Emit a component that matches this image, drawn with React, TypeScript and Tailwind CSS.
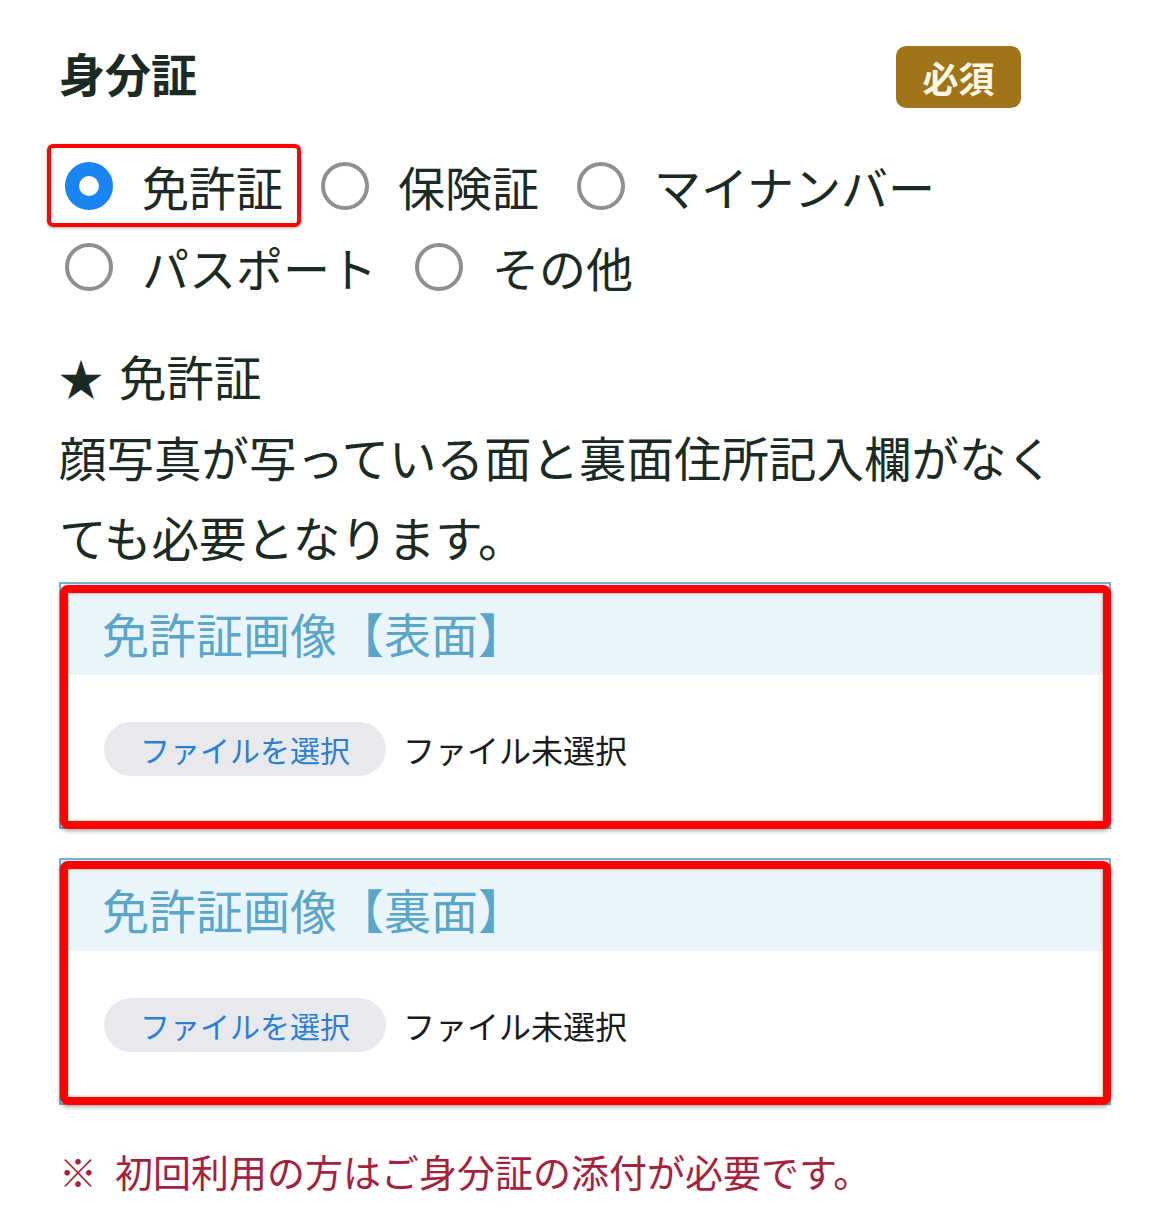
import React from "react";

const font = { fontFamily: '"Noto Sans CJK JP", "Noto Sans", sans-serif' };

const options = ["免許証", "保険証", "マイナンバー", "パスポート", "その他"];

function Radio({ label, checked }: { label: string; checked?: boolean }) {
  return (
    <label className="relative flex h-[81px] items-center">
      {checked && (
        <span className="pointer-events-none absolute -left-[18px] -right-[18px] top-[-1px] h-[83px] rounded-md border-4 border-[#f00] shadow-[0_1px_3px_rgba(0,0,0,0.35)]" />
      )}
      <span
        className={
          checked
            ? "h-12 w-12 shrink-0 rounded-full border-[14px] border-[#1a84f2] bg-white"
            : "h-12 w-12 shrink-0 rounded-full border-4 border-[#8f8f8f] bg-white"
        }
      />
      <span className="ml-[29px] text-[47px] leading-none text-[#1b2a23]">{label}</span>
    </label>
  );
}

function UploadCard({ title }: { title: string }) {
  return (
    <div className="relative border-2 border-[#6fb3cc] bg-white">
      <div className="flex h-[91px] items-center bg-[#eaf4fb] pl-[41px] pt-[5px] text-[47px] leading-none text-[#5aa6c8]">
        {title}
      </div>
      <div className="flex h-[152px] items-center pl-[43px] pb-[4px]">
        <span className="flex h-[54px] w-[282px] items-center justify-center rounded-full bg-[#e8e9ec] text-[30px] text-[#2b7fcf]">
          ファイルを選択
        </span>
        <span className="ml-[17px] text-[32px] text-[#1a1a1a]">ファイル未選択</span>
      </div>
      <span className="pointer-events-none absolute -left-[1px] -right-[2px] top-[1px] -bottom-[2px] rounded-[8px] border-[8px] border-[#f00] shadow-[0_2px_4px_rgba(0,0,0,0.35),inset_0_0_3px_rgba(0,0,0,0.4)]" />
    </div>
  );
}

export default function App() {
  return (
    <div className="min-h-[1220px] w-[1170px] bg-white" style={font}>
      <div className="px-[59px] pt-[40px]">
        <div className="flex items-start justify-between pr-[90px]">
          <h2 className="mt-[9px] text-[46px] font-bold leading-none text-[#1b2a23]">身分証</h2>
          <span className="mt-[6px] flex h-[62px] w-[125px] items-center justify-center rounded-[10px] bg-[#a07418] text-[36px] font-bold text-[#fff8e8]">
            必須
          </span>
        </div>

        <div className="mt-[37px] flex flex-wrap gap-x-[38px] pl-[6px]">
          {options.map((o, i) => (
            <Radio key={o} label={o} checked={i === 0} />
          ))}
        </div>

        <div className="mt-[29px] w-[1020px] text-[47.5px] leading-[80px] text-[#1b2a23]">
          <p>
            <span className="mr-[16px] inline-block text-[44px]">★</span>免許証
          </p>
          <p>顔写真が写っている面と裏面住所記入欄がなくても必要となります。</p>
        </div>

        <div className="mt-[5px] flex flex-col gap-[29px]">
          <UploadCard title="免許証画像【表面】" />
          <UploadCard title="免許証画像【裏面】" />
        </div>

        <p className="mt-[47px] text-[38px] leading-none text-[#a3223e]">
          <span className="mr-[18px]">※</span>初回利用の方はご身分証の添付が必要です。
        </p>
      </div>
    </div>
  );
}
